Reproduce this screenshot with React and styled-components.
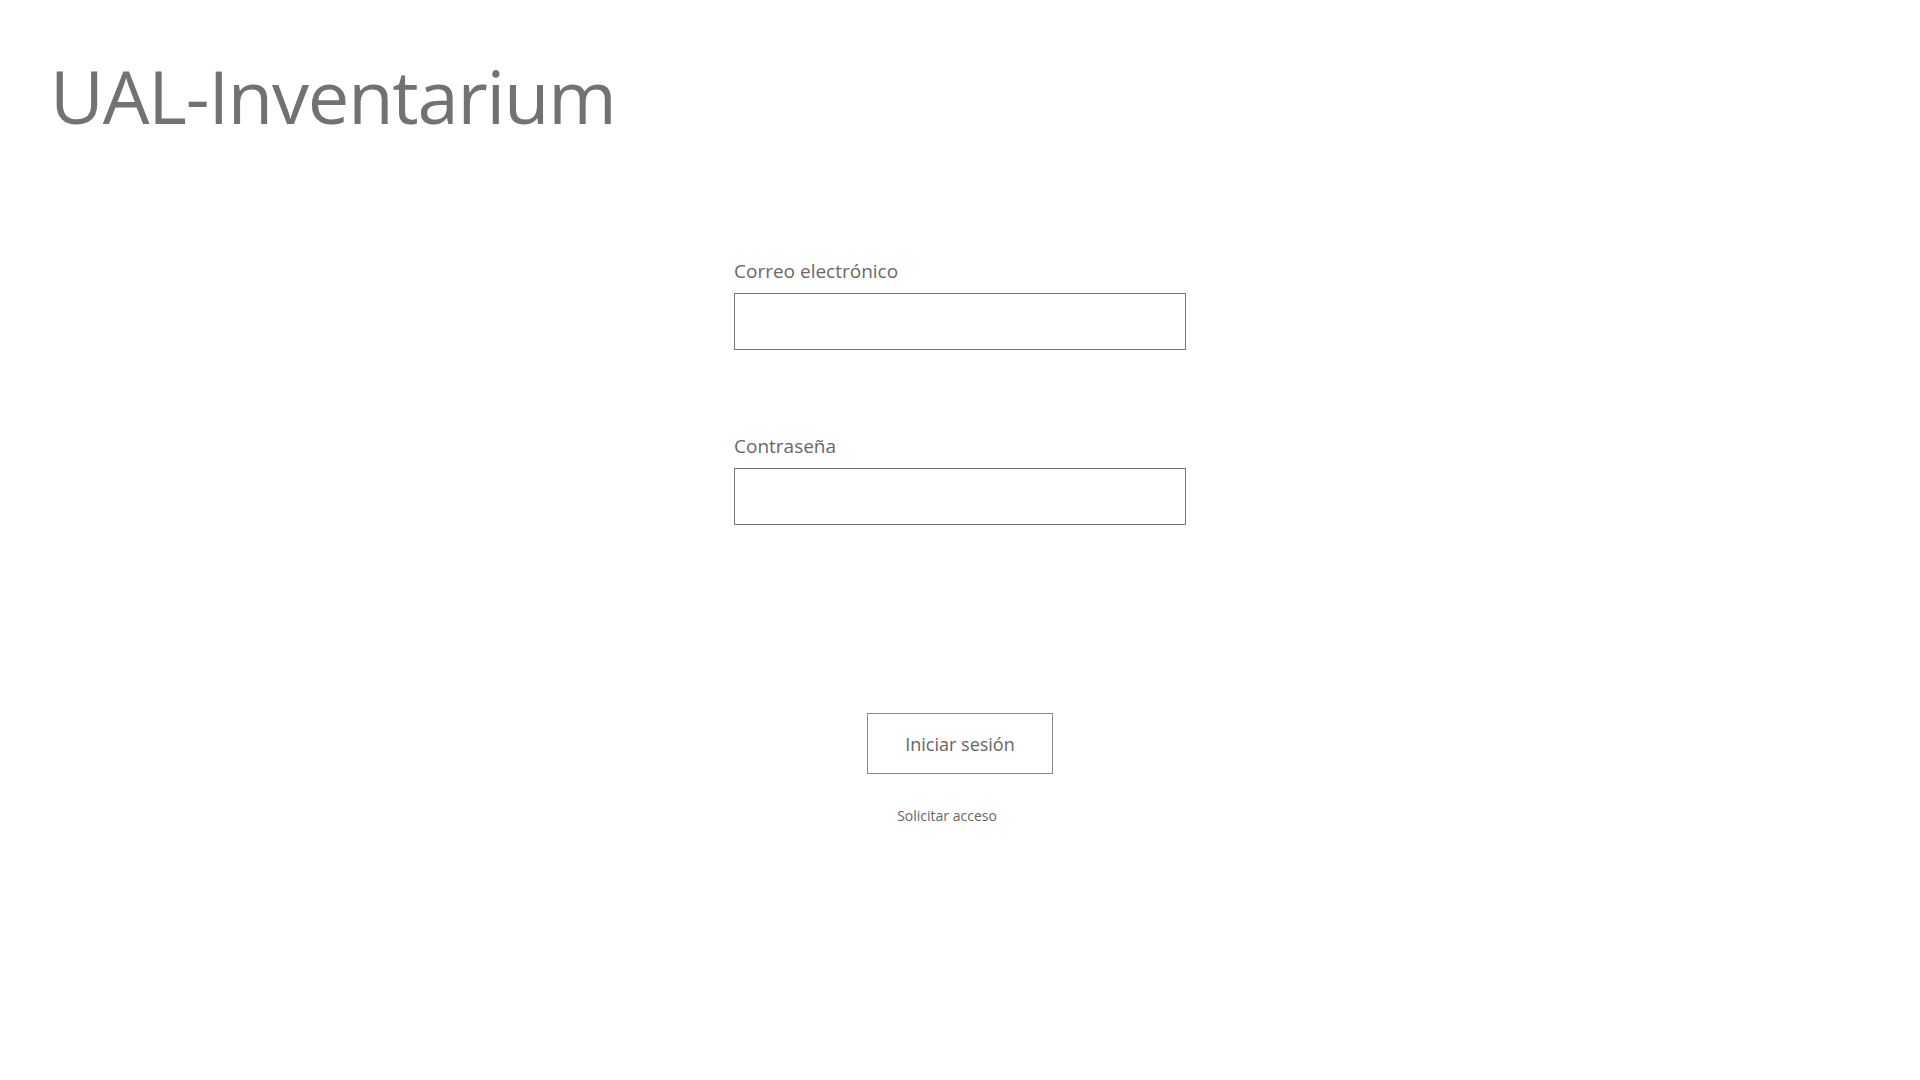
import styled, { createGlobalStyle } from "styled-components";

const GlobalStyle = createGlobalStyle`
  html, body {
    margin: 0;
    padding: 0;
    background-color: #ffffff;
  }
  body {
    font-family: "Open Sans", "Noto Sans", "Liberation Sans", sans-serif;
    color: #666666;
  }
  * {
    box-sizing: border-box;
  }
`;

const Page = styled.div`
  width: 100vw;
  min-height: 100vh;
  background-color: #ffffff;
`;

const Header = styled.header`
  padding: 59px 0 0 50px;
`;

const Title = styled.h1`
  margin: 0;
  font-size: 74px;
  line-height: 74px;
  font-weight: 400;
  letter-spacing: -1.2px;
  color: #727272;
`;

const Form = styled.form`
  width: 452px;
  margin: 124px auto 0;
  display: flex;
  flex-direction: column;
`;

const Field = styled.div`
  display: flex;
  flex-direction: column;
  gap: 8px;
  margin-bottom: ${(p) => p.$space}px;
`;

const Label = styled.label`
  font-size: 19px;
  line-height: 28px;
  color: #686868;
`;

const Input = styled.input`
  width: 100%;
  height: 57px;
  padding: 0 12px;
  border: 1px solid #767676;
  background-color: #ffffff;
  font-family: inherit;
  font-size: 18px;
  color: #444444;
  outline: none;
`;

const Actions = styled.div`
  display: flex;
  flex-direction: column;
  align-items: center;
  gap: 32px;
`;

const Button = styled.button`
  width: 186px;
  height: 61px;
  border: 1px solid #8a8a8a;
  background-color: #ffffff;
  font-family: inherit;
  font-size: 18px;
  color: #666666;
  cursor: pointer;
`;

const Link = styled.a`
  font-size: 14px;
  line-height: 20px;
  color: #666666;
  text-decoration: none;
  cursor: pointer;
  margin-right: 26px;
`;

const App = () => {
  return (
    <Page>
      <GlobalStyle />
      <Header>
        <Title>UAL-Inventarium</Title>
      </Header>
      <Form onSubmit={(e) => e.preventDefault()}>
        <Field $space={82}>
          <Label htmlFor="email">Correo electrónico</Label>
          <Input id="email" type="email" />
        </Field>
        <Field $space={188}>
          <Label htmlFor="password">Contraseña</Label>
          <Input id="password" type="password" />
        </Field>
        <Actions>
          <Button type="submit">Iniciar sesión</Button>
          <Link>Solicitar acceso</Link>
        </Actions>
      </Form>
    </Page>
  );
};

export default App;
